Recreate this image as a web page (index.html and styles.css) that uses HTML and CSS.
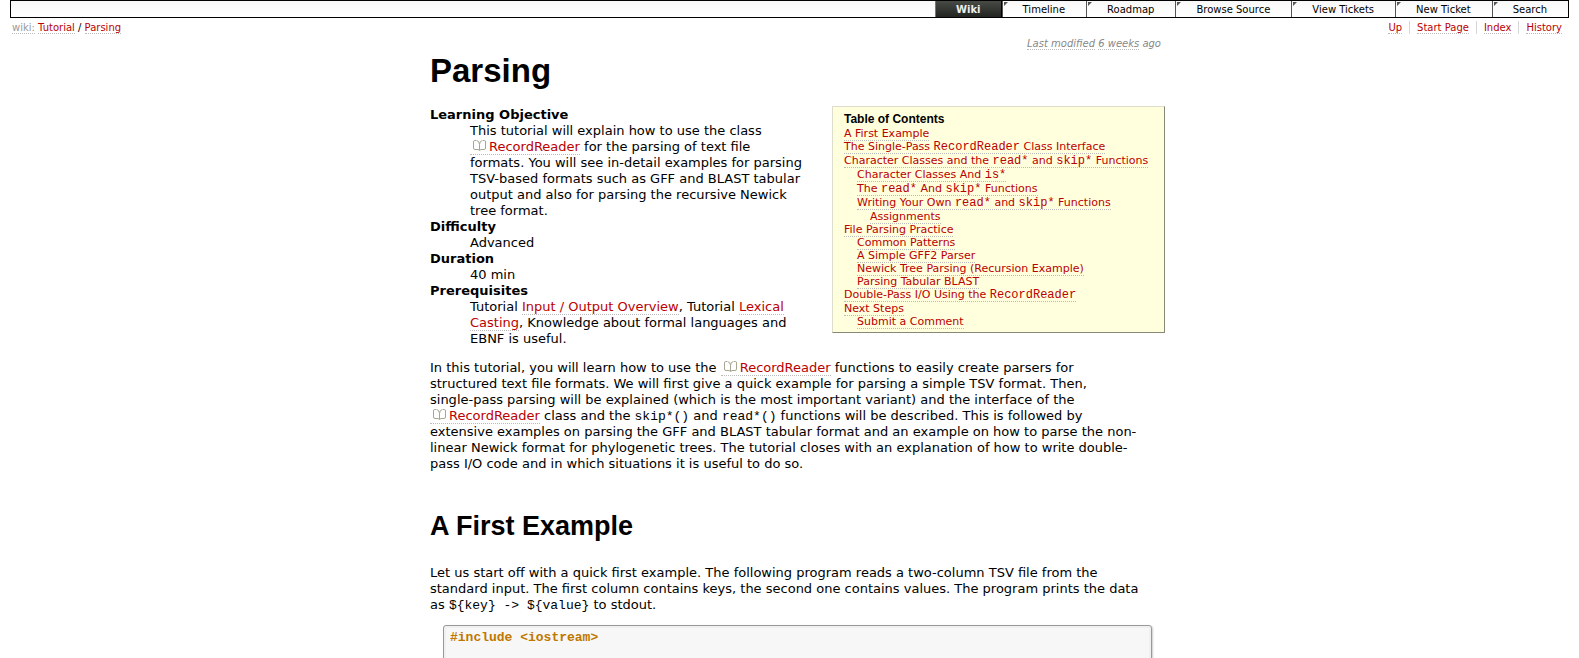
FILE: index.html
```html
<!DOCTYPE html>
<html lang="en">
<head>
<meta charset="utf-8">
<title>Tutorial/Parsing</title>
<link rel="stylesheet" href="styles.css">
</head>
<body>
<svg class="defs" aria-hidden="true">
  <symbol id="book" viewBox="0 0 13 11">
    <path d="M3 .5H1.500Q.5 .5 .5 2V8Q.5 9.500 2 9.500H5L6.500 10.500L8 9.500H11Q12.500 9.500 12.500 8V2Q12.500 .5 11.500 .5H10" fill="none" stroke="#a5a590"/>
    <path d="M3.500 .5Q6.500 1 6.500 4.500V10M9.500 .5Q6.500 1 6.500 4.500" fill="none" stroke="#a5a590"/>
  </symbol>
</svg>
<nav class="mainnav" aria-label="Main">
  <a class="tab active" href="#">Wiki</a>
  <a class="tab" href="#">Timeline</a>
  <a class="tab" href="#">Roadmap</a>
  <a class="tab" href="#">Browse Source</a>
  <a class="tab" href="#">View Tickets</a>
  <a class="tab" href="#">New Ticket</a>
  <a class="tab" href="#">Search</a>
</nav>
<div class="context">
  <div class="path"><a class="root" href="#">wiki:</a> <a href="#">Tutorial</a> / <a href="#">Parsing</a></div>
  <ul class="pagenav">
    <li><a href="#">Up</a></li>
    <li><a href="#">Start Page</a></li>
    <li><a href="#">Index</a></li>
    <li><a href="#">History</a></li>
  </ul>
</div>
<main class="content">
  <p class="modified"><a href="#">Last modified</a> <a href="#">6 weeks</a> ago</p>
  <h1>Parsing</h1>
  <div class="intro">
    <dl>
      <dt>Learning Objective</dt>
      <dd>This tutorial will explain how to use the class<br><a class="ext" href="#"><svg><use href="#book"/></svg>RecordReader</a> for the parsing of text file<br>formats. You will see in-detail examples for parsing<br>TSV-based formats such as GFF and BLAST tabular<br>output and also for parsing the recursive Newick<br>tree format.</dd>
      <dt>Difficulty</dt>
      <dd>Advanced</dd>
      <dt>Duration</dt>
      <dd>40 min</dd>
      <dt>Prerequisites</dt>
      <dd>Tutorial <a href="#">Input / Output Overview</a>, Tutorial <a href="#">Lexical<br>Casting</a>, Knowledge about formal languages and<br>EBNF is useful.</dd>
    </dl>
    <nav class="toc" aria-labelledby="toc-title">
      <h4 id="toc-title">Table of Contents</h4>
      <ol>
        <li><a href="#">A First Example</a></li>
        <li class="tall"><a href="#">The Single-Pass <code>RecordReader</code> Class Interface</a></li>
        <li class="tall"><a href="#">Character Classes and the <code>read*</code> and <code>skip*</code> Functions</a>
          <ol>
            <li class="tall"><a href="#">Character Classes And <code>is*</code></a></li>
            <li class="tall"><a href="#">The <code>read*</code> And <code>skip*</code> Functions</a></li>
            <li class="tall"><a href="#">Writing Your Own <code>read*</code> and <code>skip*</code> Functions</a>
              <ol><li><a href="#">Assignments</a></li></ol>
            </li>
          </ol>
        </li>
        <li><a href="#">File Parsing Practice</a>
          <ol>
            <li><a href="#">Common Patterns</a></li>
            <li><a href="#">A Simple GFF2 Parser</a></li>
            <li><a href="#">Newick Tree Parsing (Recursion Example)</a></li>
            <li><a href="#">Parsing Tabular BLAST</a></li>
          </ol>
        </li>
        <li class="tall"><a href="#">Double-Pass I/O Using the <code>RecordReader</code></a></li>
        <li><a href="#">Next Steps</a>
          <ol><li><a href="#">Submit a Comment</a></li></ol>
        </li>
      </ol>
    </nav>
  </div>
  <p>In this tutorial, you will learn how to use the <a class="ext" href="#"><svg><use href="#book"/></svg>RecordReader</a> functions to easily create parsers for<br>structured text file formats. We will first give a quick example for parsing a simple TSV format. Then,<br>single-pass parsing will be explained (which is the most important variant) and the interface of the<br><a class="ext" href="#"><svg><use href="#book"/></svg>RecordReader</a> class and the <code>skip*()</code> and <code>read*()</code> functions will be described. This is followed by<br>extensive examples on parsing the GFF and BLAST tabular format and an example on how to parse the non-<br>linear Newick format for phylogenetic trees. The tutorial closes with an explanation of how to write double-<br>pass I/O code and in which situations it is useful to do so.</p>
  <h2>A First Example</h2>
  <p>Let us start off with a quick first example. The following program reads a two-column TSV file from the<br>standard input. The first column contains keys, the second one contains values. The program prints the data<br>as <code>${key} -&gt; ${value}</code> to stdout.</p>
  <pre><code>#include &lt;iostream&gt;

</code></pre>
</main>
</body>
</html>
```

FILE: styles.css
```css
* { box-sizing: border-box; }
html { overflow: hidden; }
body {
  margin: 0 10px;
  background: #fff;
  color: #000;
  font: 13px/16px Verdana, "DejaVu Sans", sans-serif;
}
a {
  color: #b00;
  text-decoration: none;
  border-bottom: 1px dotted #bbb;
}
code, pre { font-family: "Liberation Mono", monospace; font-size: 13px; line-height: 1; }
.defs { display: none; }

.mainnav {
  display: flex;
  justify-content: flex-end;
  height: 18px;
  border: 1px solid #000;
  background: linear-gradient(#f8f8f8, #fff);
  font-size: 10px;
  line-height: 17px;
}
.tab {
  position: relative;
  padding: 0 21px 0 20px;
  border: 0;
  border-left: 1px solid #555;
  color: #000;
}
.tab::before {
  content: "";
  position: absolute;
  left: 1px;
  top: 1px;
  border-top: 4px solid #555;
  border-right: 4px solid transparent;
}
.tab.active {
  padding-right: 20px;
  background: linear-gradient(#484a46, #222421);
  border-left-color: #777;
  border-right: 1px solid #000;
  color: #eee;
  font-weight: bold;
}
.tab.active::before { display: none; }

.context {
  display: flex;
  justify-content: space-between;
  padding: 3px 7px 0 2px;
  font-size: 10px;
  line-height: 13px;
}
.path .root { color: #999; }
.pagenav { display: flex; margin: 0; padding: 0; list-style: none; }
.pagenav li { padding: 0 7px; }
.pagenav li + li { border-left: 1px solid #d7d7d7; }
.pagenav li:last-child { padding-right: 0; }

.content { max-width: 751px; margin: 0 auto; padding-left: 16px; }
.modified {
  margin: 3px 4px 0;
  text-align: right;
  font-size: 10px;
  line-height: 13px;
  font-style: italic;
  color: #888;
}
.modified a { color: #888; }
h1, h2, h4 { font-family: "Liberation Sans", Arial, sans-serif; font-weight: bold; }
h1 { margin: 0; padding-top: 3px; font-size: 33px; line-height: 36px; }
h2 { margin: 38px 0 23px; font-size: 27px; line-height: 32px; }
p { margin: 0 0 12px; }

.intro { display: flex; align-items: flex-start; margin: 17px 0 13px; }
dl { flex: 1; margin: 0; padding-top: 1px; }
dt { font-weight: bold; }
dd { margin: 0 0 0 40px; }
.ext { white-space: nowrap; }
.ext svg { width: 13px; height: 11px; margin: 0 3px 0 3px; }

.toc {
  flex: 0 0 333px;
  padding: 5px 11px 4px;
  border: 1px solid;
  border-color: #ddc #887 #887 #ddc;
  background: #ffd;
  font-size: 11px;
  line-height: 13px;
}
.toc h4 { margin: 0 0 1px; font-size: 12px; line-height: 14px; }
.toc ol { margin: 0; padding: 0; list-style: none; }
.toc ol ol { padding-left: 13px; line-height: 13px; }
.toc .tall { line-height: 14px; }
.toc code { font-size: 12px; }

pre {
  margin: 0 13px;
  padding: 4px 6px;
  min-height: 60px;
  border: 1px solid #999;
  border-radius: 3px;
  background: #f7f7f7;
  box-shadow: inset 0 0 0 2px #f0f0f0, 1px 1px 2px #ccc;
  line-height: 16px;
}
pre code { color: #c07800; font-weight: bold; }
```
